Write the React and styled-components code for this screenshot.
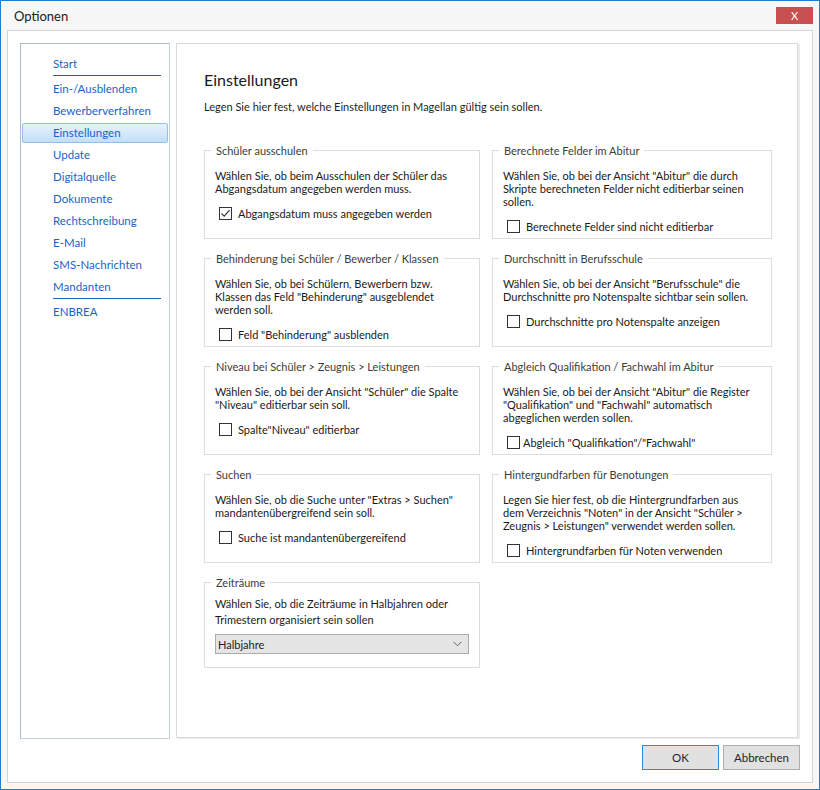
import React from 'react';
import styled, { createGlobalStyle, css } from 'styled-components';

const GlobalStyle = createGlobalStyle`
  html, body { margin: 0; padding: 0; background: #ffffff; }
  body {
    font-family: Lato, "Open Sans", "Noto Sans", sans-serif;
    font-size: 11px;
    color: #1e1e1e;
  }
  * { box-sizing: border-box; }
`;

const Window = styled.div`
  width: 820px;
  height: 790px;
  border: 1px solid #1a7fd4;
  background: #f7f7f7;
  display: flex;
  flex-direction: column;
`;

const TitleBar = styled.div`
  height: 29px;
  flex: none;
  display: flex;
  align-items: flex-start;
  justify-content: space-between;
  padding: 0 6px 0 13px;
`;

const TitleText = styled.div`
  font-size: 13px;
  line-height: 15px;
  margin-top: 8px;
  color: #1a1a1a;
`;

const CloseButton = styled.button`
  width: 37px;
  height: 17px;
  margin-top: 6px;
  border: 0;
  padding: 0;
  background: #c75050;
  color: #ffffff;
  font-family: Lato, sans-serif;
  font-size: 11px;
  line-height: 17px;
  text-align: center;
`;

const Frame = styled.div`
  flex: 1;
  margin: 0 6px 6px 6px;
  border: 1px solid #d4d4d4;
  background: #ffffff;
  padding: 12px;
  display: flex;
  flex-direction: column;
`;

const Content = styled.div`
  flex: 1;
  display: flex;
  gap: 6px;
  min-height: 0;
`;

const Sidebar = styled.nav`
  width: 150px;
  flex: none;
  border: 1px solid #c6d3dd;
  border-left-color: #a9bdcc;
  border-top-color: #a9bdcc;
  background: #ffffff;
`;

const NavList = styled.ul`
  list-style: none;
  margin: 0;
  padding: 9px 0 0;
  font-size: 11.5px;
`;

const NavItem = styled.li`
  height: 22px;
  line-height: 20px;
  margin: 0 1px;
  padding-left: 30px;
  color: #1c63c7;
  border: 1px solid transparent;
  border-radius: 2px;
  white-space: nowrap;
  ${(p) =>
    p.$active &&
    css`
      height: 20px;
      line-height: 18px;
      margin: 1px 1px;
      border-color: #92bfe9;
      background: linear-gradient(#e7f2fd, #c3dff8);
    `}
`;

const NavRule = styled.li`
  height: 1px;
  margin: 0 8px 2px 32px;
  background: #1f5fbf;
`;

const Main = styled.main`
  flex: 1;
  margin-right: 2px;
  margin-bottom: 1px;
  border: 1px solid #dadada;
  box-shadow: 2px 1px 0 #ebebeb;
  padding: 26px 0 0 27px;
  background: #ffffff;
`;

const Heading = styled.h1`
  margin: 0;
  font-size: 16px;
  font-weight: 400;
  line-height: 20px;
  color: #1a1a1a;
`;

const Intro = styled.p`
  margin: 9px 0 0;
  line-height: 16px;
  color: #1e1e1e;
`;

const Grid = styled.div`
  margin-top: 28px;
  display: grid;
  grid-template-columns: 276px 280px;
  column-gap: 12px;
  row-gap: 12px;
  grid-auto-rows: 96px;
`;

const Group = styled.fieldset`
  margin: 0;
  min-width: 0;
  padding: 0 10px 0 10px;
  border: 1px solid #dcdcdc;
  ${(p) =>
    p.$auto &&
    css`
      align-self: start;
      padding-bottom: 13px;
    `}
`;

const Legend = styled.legend`
  padding: 0 5px;
  margin-left: -4px;
  line-height: 15px;
  color: #3c3c3c;
`;

const Description = styled.p`
  margin: 0;
  padding-top: ${(p) => (p.$loose ? '6px' : '11px')};
  line-height: ${(p) => (p.$loose ? '16px' : '13px')};
  color: #1a1a1a;
  white-space: nowrap;
`;

const CheckRow = styled.label`
  margin-top: 10px;
  height: 17px;
  display: flex;
  align-items: center;
  gap: ${(p) => (p.$tight ? '3px' : '6px')};
  padding-left: 4px;
  color: #1a1a1a;
  white-space: nowrap;
`;

const Box = styled.span`
  width: 13px;
  height: 13px;
  flex: none;
  border: 1px solid #333333;
  background: #ffffff;
  display: flex;
  align-items: center;
  justify-content: center;
`;

const SelectBox = styled.div`
  margin-top: 6px;
  height: 20px;
  border: 1px solid #acacac;
  background: #e5e5e5;
  display: flex;
  align-items: center;
  justify-content: space-between;
  padding: 0 6px 0 2px;
  color: #1a1a1a;
`;

const ButtonRow = styled.div`
  flex: none;
  height: 25px;
  margin-top: 6px;
  display: flex;
  justify-content: flex-end;
  gap: 4px;
`;

const DialogButton = styled.button`
  width: 77px;
  height: 25px;
  padding: 0;
  font-family: Lato, "Open Sans", sans-serif;
  font-size: 11.5px;
  font-weight: 400;
  color: #262626;
  background: #e1e1e1;
  border: 1px solid ${(p) => (p.$primary ? '#2f88db' : '#adadad')};
`;

const Checkbox = ({ checked, label, tight }) => (
  <CheckRow $tight={tight}>
    <Box>
      {checked && (
        <svg width="11" height="11" viewBox="0 0 11 11">
          <polyline points="1.5,5.5 4.2,8.2 9.5,2.2" fill="none" stroke="#333" strokeWidth="1.1" />
        </svg>
      )}
    </Box>
    <span>{label}</span>
  </CheckRow>
);

const Lines = ({ lines }) =>
  lines.map((l, i) => (
    <React.Fragment key={i}>
      {l}
      {i < lines.length - 1 && <br />}
    </React.Fragment>
  ));

const groups = [
  {
    title: 'Schüler ausschulen',
    lines: ['Wählen Sie, ob beim Ausschulen der Schüler das', 'Abgangsdatum angegeben werden muss.'],
    check: 'Abgangsdatum muss angegeben werden',
    checked: true,
  },
  {
    title: 'Berechnete Felder im Abitur',
    lines: [
      'Wählen Sie, ob bei der Ansicht "Abitur" die durch',
      'Skripte berechneten Felder nicht editierbar seinen',
      'sollen.',
    ],
    check: 'Berechnete Felder sind nicht editierbar',
  },
  {
    title: 'Behinderung bei Schüler / Bewerber / Klassen',
    lines: [
      'Wählen Sie, ob bei Schülern, Bewerbern bzw.',
      'Klassen das Feld "Behinderung" ausgeblendet',
      'werden soll.',
    ],
    check: 'Feld "Behinderung" ausblenden',
  },
  {
    title: 'Durchschnitt in Berufsschule',
    lines: ['Wählen Sie, ob bei der Ansicht "Berufsschule" die', 'Durchschnitte pro Notenspalte sichtbar sein sollen.'],
    check: 'Durchschnitte pro Notenspalte anzeigen',
  },
  {
    title: 'Niveau bei Schüler > Zeugnis > Leistungen',
    lines: ['Wählen Sie, ob bei der Ansicht "Schüler" die Spalte', '"Niveau" editierbar sein soll.'],
    check: 'Spalte"Niveau" editierbar',
  },
  {
    title: 'Abgleich Qualifikation / Fachwahl im Abitur',
    lines: [
      'Wählen Sie, ob bei der Ansicht "Abitur" die Register',
      '"Qualifikation" und "Fachwahl" automatisch',
      'abgeglichen werden sollen.',
    ],
    check: 'Abgleich "Qualifikation"/"Fachwahl"',
    tight: true,
  },
  {
    title: 'Suchen',
    lines: ['Wählen Sie, ob die Suche unter "Extras > Suchen"', 'mandantenübergreifend sein soll.'],
    check: 'Suche ist mandantenübergereifend',
  },
  {
    title: 'Hintergundfarben für Benotungen',
    lines: [
      'Legen Sie hier fest, ob die Hintergrundfarben aus',
      'dem Verzeichnis "Noten" in der Ansicht "Schüler >',
      'Zeugnis > Leistungen" verwendet werden sollen.',
    ],
    check: 'Hintergrundfarben für Noten verwenden',
  },
];

const navTop = ['Start'];
const navMid = [
  'Ein-/Ausblenden',
  'Bewerberverfahren',
  'Einstellungen',
  'Update',
  'Digitalquelle',
  'Dokumente',
  'Rechtschreibung',
  'E-Mail',
  'SMS-Nachrichten',
  'Mandanten',
];
const navBottom = ['ENBREA'];

export default function App() {
  return (
    <>
      <GlobalStyle />
      <Window>
        <TitleBar>
          <TitleText>Optionen</TitleText>
          <CloseButton aria-label="Schließen">X</CloseButton>
        </TitleBar>
        <Frame>
          <Content>
            <Sidebar>
              <NavList>
                {navTop.map((n) => (
                  <NavItem key={n}>{n}</NavItem>
                ))}
                <NavRule />
                {navMid.map((n) => (
                  <NavItem key={n} $active={n === 'Einstellungen'}>
                    {n}
                  </NavItem>
                ))}
                <NavRule />
                {navBottom.map((n) => (
                  <NavItem key={n}>{n}</NavItem>
                ))}
              </NavList>
            </Sidebar>
            <Main>
              <Heading>Einstellungen</Heading>
              <Intro>Legen Sie hier fest, welche Einstellungen in Magellan gültig sein sollen.</Intro>
              <Grid>
                {groups.map((g) => (
                  <Group key={g.title}>
                    <Legend>{g.title}</Legend>
                    <Description>
                      <Lines lines={g.lines} />
                    </Description>
                    <Checkbox checked={g.checked} label={g.check} tight={g.tight} />
                  </Group>
                ))}
                <Group $auto>
                  <Legend>Zeiträume</Legend>
                  <Description $loose>
                    <Lines lines={['Wählen Sie, ob die Zeiträume in Halbjahren oder', 'Trimestern organisiert sein sollen']} />
                  </Description>
                  <SelectBox>
                    <span>Halbjahre</span>
                    <svg width="9" height="6" viewBox="0 0 9 6">
                      <polyline points="0.5,0.8 4.5,4.8 8.5,0.8" fill="none" stroke="#606060" strokeWidth="1" />
                    </svg>
                  </SelectBox>
                </Group>
              </Grid>
            </Main>
          </Content>
          <ButtonRow>
            <DialogButton $primary>OK</DialogButton>
            <DialogButton>Abbrechen</DialogButton>
          </ButtonRow>
        </Frame>
      </Window>
    </>
  );
}
